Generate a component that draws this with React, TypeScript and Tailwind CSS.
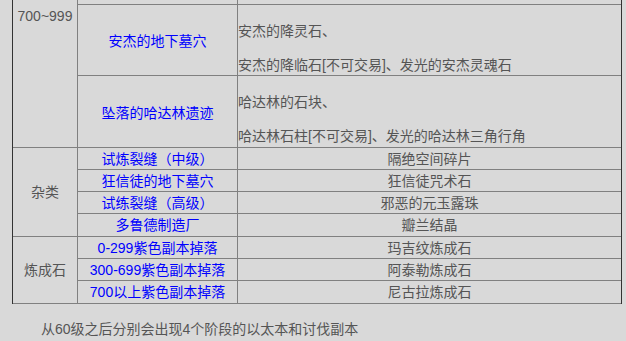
const FONT = 'font-["Liberation_Sans","Noto_Sans_CJK_SC",sans-serif]'

type TallRow = { dungeon: string; first: string; second: string }

// 700~999 dungeons, each with two drop lines
const tallRows: TallRow[] = [
  { dungeon: '', first: '', second: '地下灵魂石[不可交易]、发光的地下灵魂石' },
  { dungeon: '安杰的地下墓穴', first: '安杰的降灵石、', second: '安杰的降临石[不可交易]、发光的安杰灵魂石' },
  { dungeon: '坠落的哈达林遗迹', first: '哈达林的石块、', second: '哈达林石柱[不可交易]、发光的哈达林三角行角' },
]

const miscRows = [
  ['试炼裂缝（中级）', '隔绝空间碎片'],
  ['狂信徒的地下墓穴', '狂信徒咒术石'],
  ['试练裂缝（高级）', '邪恶的元玉露珠'],
  ['多鲁德制造厂', '瓣兰结晶'],
]

const stoneRows = [
  ['0-299紫色副本掉落', '玛吉纹炼成石'],
  ['300-699紫色副本掉落', '阿泰勒炼成石'],
  ['700以上紫色副本掉落', '尼古拉炼成石'],
]

function SmallGroup({ label, rows }: { label: string; rows: string[][] }) {
  return (
    <div className="flex border-b border-[#808080]">
      <div className="w-[65px] flex items-center justify-center border-r border-[#808080] text-[#555]">
        {label}
      </div>
      <div className="flex-1 flex flex-col">
        {rows.map(([src, drop], i) => (
          <div
            key={src}
            className={`flex h-[22px] ${i < rows.length - 1 ? 'border-b border-[#808080]' : ''}`}
          >
            <div className="w-[160px] flex items-center justify-center pt-px border-r border-[#808080] text-[#0000ff]">
              {src}
            </div>
            <div className="flex-1 flex items-center justify-center pt-px text-[#555]">{drop}</div>
          </div>
        ))}
      </div>
    </div>
  )
}

export default function App() {
  return (
    <div className={`w-[626px] h-[341px] overflow-hidden bg-[#d9d9d9] text-[14px] leading-[17px] ${FONT}`}>
      <div className="ml-[12px] w-[610px] -mt-[66px] border-x border-b border-[#333]">
        {/* 700~999 group */}
        <div className="flex border-b border-[#808080]">
          <div className="w-[65px] pt-[74px] text-center border-r border-[#808080] text-[#555]">
            700~999
          </div>
          <div className="flex-1 flex flex-col">
            {tallRows.map((r, i) => (
              <div
                key={i}
                className={`flex h-[71px] ${i < tallRows.length - 1 ? 'border-b border-[#808080]' : ''}`}
              >
                <div className="w-[160px] flex items-center justify-center pt-[3px] border-r border-[#808080] text-[#0000ff]">
                  {r.dungeon}
                </div>
                <div className="flex-1 pt-px text-[#555] whitespace-nowrap">
                  <div className="h-[17px]" />
                  <div>{r.first}</div>
                  <div className="h-[17px]" />
                  <div>{r.second}</div>
                </div>
              </div>
            ))}
          </div>
        </div>
        <SmallGroup label="杂类" rows={miscRows} />
        <div className="-mb-px">
          <SmallGroup label="炼成石" rows={stoneRows} />
        </div>
      </div>
      <p className="mt-[17px] pl-[41px] text-[#555]">从60级之后分别会出现4个阶段的以太本和讨伐副本</p>
    </div>
  )
}
